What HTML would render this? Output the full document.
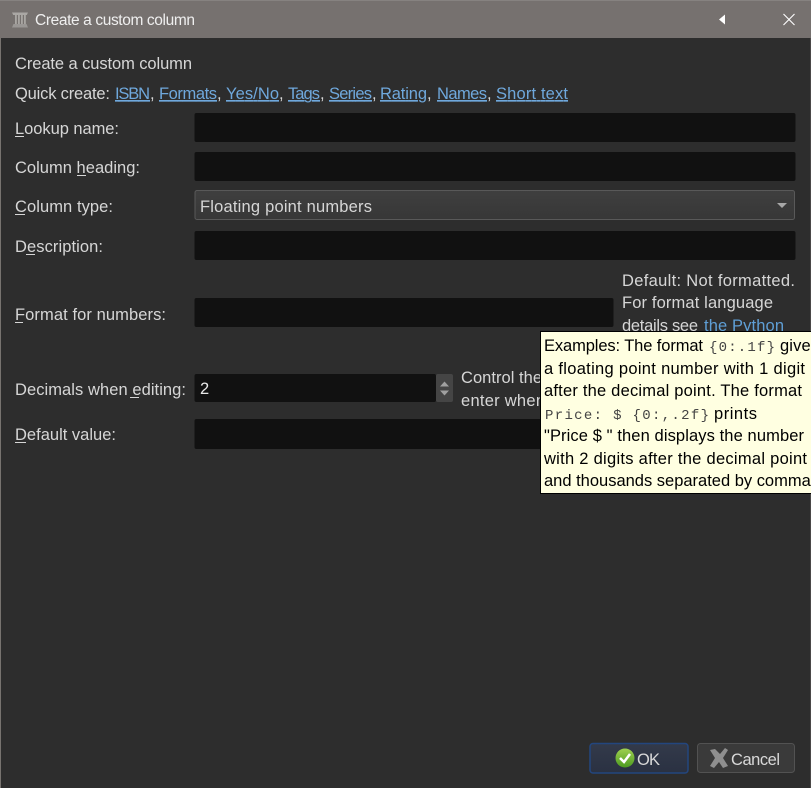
<!DOCTYPE html>
<html><head><meta charset="utf-8"><title>Create a custom column</title>
<style>
html,body{margin:0;padding:0;width:811px;height:788px;overflow:hidden;background:#2d2d2d}
svg{display:block}
text{font-family:"Liberation Sans",Arial,sans-serif;font-size:16.5px;fill:#d6d6d6;white-space:pre}
.l{fill:#6fa8dc;text-decoration:underline}
.t{fill:#000}
.m{font-family:"Liberation Mono",monospace;font-size:14px;fill:#444}
.u{stroke:#d6d6d6;stroke-width:1}
</style></head><body>
<svg width="811" height="788" viewBox="0 0 811 788" xmlns="http://www.w3.org/2000/svg">
<defs>
<linearGradient id="cb" x1="0" y1="0" x2="0" y2="1"><stop offset="0" stop-color="#3f3f3f"/><stop offset="1" stop-color="#373737"/></linearGradient>
<linearGradient id="ok" x1="0" y1="0" x2="0" y2="1"><stop offset="0" stop-color="#333a4a"/><stop offset="1" stop-color="#2a3142"/></linearGradient>
<linearGradient id="gr" x1="0" y1="0" x2="0" y2="1"><stop offset="0" stop-color="#9fd050"/><stop offset="1" stop-color="#4c9a20"/></linearGradient>
<clipPath id="tipclip"><rect x="541" y="332" width="270" height="161"/></clipPath>
<clipPath id="pyclip"><rect x="600" y="270" width="211" height="61"/></clipPath>
<clipPath id="ctlclip"><rect x="455" y="365" width="85" height="50"/></clipPath>
</defs>
<rect width="811" height="788" fill="#2d2d2d"/>
<rect x="0" y="0" width="811" height="38" fill="#76716f"/>
<rect x="0" y="0" width="811" height="1" fill="#868280"/>
<rect x="0" y="38" width="1" height="750" fill="#77736f"/>
<rect x="810" y="38" width="1" height="750" fill="#4a4847"/>

<!-- title icon -->
<g fill="#a9a6a3">
<path d="M12 12.500h16l-1.200 2.500H13.200z" fill="#aaa7a4"/>
<rect x="15" y="15" width="1.800" height="9"/><rect x="18" y="15" width="1.800" height="9"/><rect x="21" y="15" width="1.800" height="9"/><rect x="24" y="15" width="1.800" height="9"/>
<path d="M13.500 24h13l1.500 3.500H12z" fill="#9a9795"/>
</g>
<text x="35" y="25" textLength="160" lengthAdjust="spacing" style="font-size:15.500px;fill:#efefef">Create a custom column</text>
<path d="M725 14.500v10l-6-5z" fill="#fff"/>
<path d="M783.500 14l11 11M794.500 14l-11 11" stroke="#fff" stroke-width="1.100" fill="none"/>

<text x="15" y="69" textLength="177" lengthAdjust="spacing">Create a custom column</text>
<text x="15" y="99" textLength="95" lengthAdjust="spacing">Quick create:</text>
<text x="115" y="99" textLength="35" lengthAdjust="spacing" class="l">ISBN</text><text x="150" y="99">,</text>
<text x="159" y="99" textLength="58" lengthAdjust="spacing" class="l">Formats</text><text x="217" y="99">,</text>
<text x="226" y="99" textLength="53" lengthAdjust="spacing" class="l">Yes/No</text><text x="279" y="99">,</text>
<text x="288" y="99" textLength="32" lengthAdjust="spacing" class="l">Tags</text><text x="320" y="99">,</text>
<text x="329" y="99" textLength="43" lengthAdjust="spacing" class="l">Series</text><text x="372" y="99">,</text>
<text x="380" y="99" textLength="47" lengthAdjust="spacing" class="l">Rating</text><text x="427" y="99">,</text>
<text x="437" y="99" textLength="50" lengthAdjust="spacing" class="l">Names</text><text x="487" y="99">,</text>
<text x="496" y="99" textLength="72" lengthAdjust="spacing" class="l">Short text</text>

<!-- labels -->
<text x="15" y="134" textLength="104" lengthAdjust="spacing">Lookup name:</text>
<line class="u" x1="15" y1="136.500" x2="24" y2="136.500"/>
<text x="15" y="173" textLength="125" lengthAdjust="spacing">Column heading:</text>
<line class="u" x1="77" y1="175.500" x2="86" y2="175.500"/>
<text x="15" y="212" textLength="98" lengthAdjust="spacing">Column type:</text>
<line class="u" x1="15" y1="214.500" x2="25" y2="214.500"/>
<text x="15" y="252" textLength="88" lengthAdjust="spacing">Description:</text>
<line class="u" x1="26" y1="254.500" x2="35" y2="254.500"/>
<text x="15" y="320" textLength="151" lengthAdjust="spacing">Format for numbers:</text>
<line class="u" x1="15" y1="322.500" x2="23" y2="322.500"/>
<text x="15" y="395" textLength="171" lengthAdjust="spacing">Decimals when editing:</text>
<line class="u" x1="130" y1="397.500" x2="139" y2="397.500"/>
<text x="15" y="440" textLength="101" lengthAdjust="spacing">Default value:</text>
<line class="u" x1="15" y1="442.500" x2="26" y2="442.500"/>

<!-- fields -->
<rect x="194.500" y="113" width="601" height="29" rx="2" fill="#111"/>
<rect x="194.500" y="152" width="601" height="29" rx="2" fill="#111"/>
<rect x="195" y="190.500" width="599.500" height="29" rx="2" fill="url(#cb)" stroke="#595959"/>
<text x="200" y="212" textLength="172" lengthAdjust="spacing">Floating point numbers</text>
<path d="M777 203h10l-5 5z" fill="#a8a8a8"/>
<rect x="194.500" y="231" width="601" height="29" rx="2" fill="#111"/>
<rect x="194.500" y="298" width="419" height="29" rx="2" fill="#111"/>
<rect x="194.500" y="374" width="241.500" height="28" rx="2" fill="#111"/>
<rect x="436" y="374" width="17" height="28" rx="2" fill="#454545"/>
<path d="M440 386.500l4.500-5 4.500 5z" fill="#a0a0a0"/>
<path d="M440 390.500h9l-4.500 5z" fill="#a0a0a0"/>
<text x="200" y="394" style="fill:#e8e8e8">2</text>
<rect x="194.500" y="419" width="601" height="30" rx="2" fill="#111"/>

<!-- right help text -->
<text x="622" y="286" textLength="173" lengthAdjust="spacing">Default: Not formatted.</text>
<text x="622" y="308" textLength="151" lengthAdjust="spacing">For format language</text>
<g clip-path="url(#pyclip)">
<text x="622" y="331" textLength="76" lengthAdjust="spacing">details see</text>
<text x="704" y="331" textLength="80" lengthAdjust="spacing" style="fill:#5f9fd6">the Python</text>
</g>
<g clip-path="url(#ctlclip)">
<text x="461" y="383" textLength="81" lengthAdjust="spacing">Control the</text>
<text x="461" y="406" textLength="84" lengthAdjust="spacing">enter when</text>
</g>

<!-- tooltip -->
<rect x="540.500" y="331.500" width="272" height="162" fill="#ffffe1" stroke="#000"/>
<g clip-path="url(#tipclip)">
<text class="t" x="544" y="351" textLength="159" lengthAdjust="spacing">Examples: The format</text>
<text class="m" x="709" y="351" textLength="66" lengthAdjust="spacing">{0:.1f}</text>
<text class="t" x="780" y="351" textLength="39" lengthAdjust="spacing">gives</text>
<text class="t" x="544" y="374" textLength="261" lengthAdjust="spacing">a floating point number with 1 digit</text>
<text class="t" x="544" y="396" textLength="258" lengthAdjust="spacing">after the decimal point. The format</text>
<text class="m" x="545" y="419" textLength="164" lengthAdjust="spacing">Price: $ {0:,.2f}</text>
<text class="t" x="714" y="419" textLength="43" lengthAdjust="spacing">prints</text>
<text class="t" x="544" y="441" textLength="260" lengthAdjust="spacing">"Price $ " then displays the number</text>
<text class="t" x="544" y="464" textLength="263" lengthAdjust="spacing">with 2 digits after the decimal point</text>
<text class="t" x="544" y="486" textLength="275" lengthAdjust="spacing">and thousands separated by commas</text>
</g>

<!-- buttons -->
<rect x="590" y="743.500" width="98" height="29.500" rx="3" fill="url(#ok)" stroke="#23467e" stroke-width="1.500"/>
<circle cx="625" cy="758" r="9.500" fill="url(#gr)"/>
<path d="M620 758l4 4 6-8" fill="none" stroke="#fff" stroke-width="2.500"/>
<text x="637" y="765" textLength="23" lengthAdjust="spacing" style="fill:#d8d8d8">OK</text>
<rect x="697.500" y="743.500" width="97" height="29" rx="3" fill="#3a3a3a" stroke="#525252"/>
<path d="M710 750l5-1 5 5 5-6 3 2-5 8 5 8-5 2-4-6-5 6-4-2 5-8z" fill="#8f8f8f"/>
<text x="731" y="765" textLength="49" lengthAdjust="spacing" style="fill:#d8d8d8">Cancel</text>
</svg>
</body></html>
